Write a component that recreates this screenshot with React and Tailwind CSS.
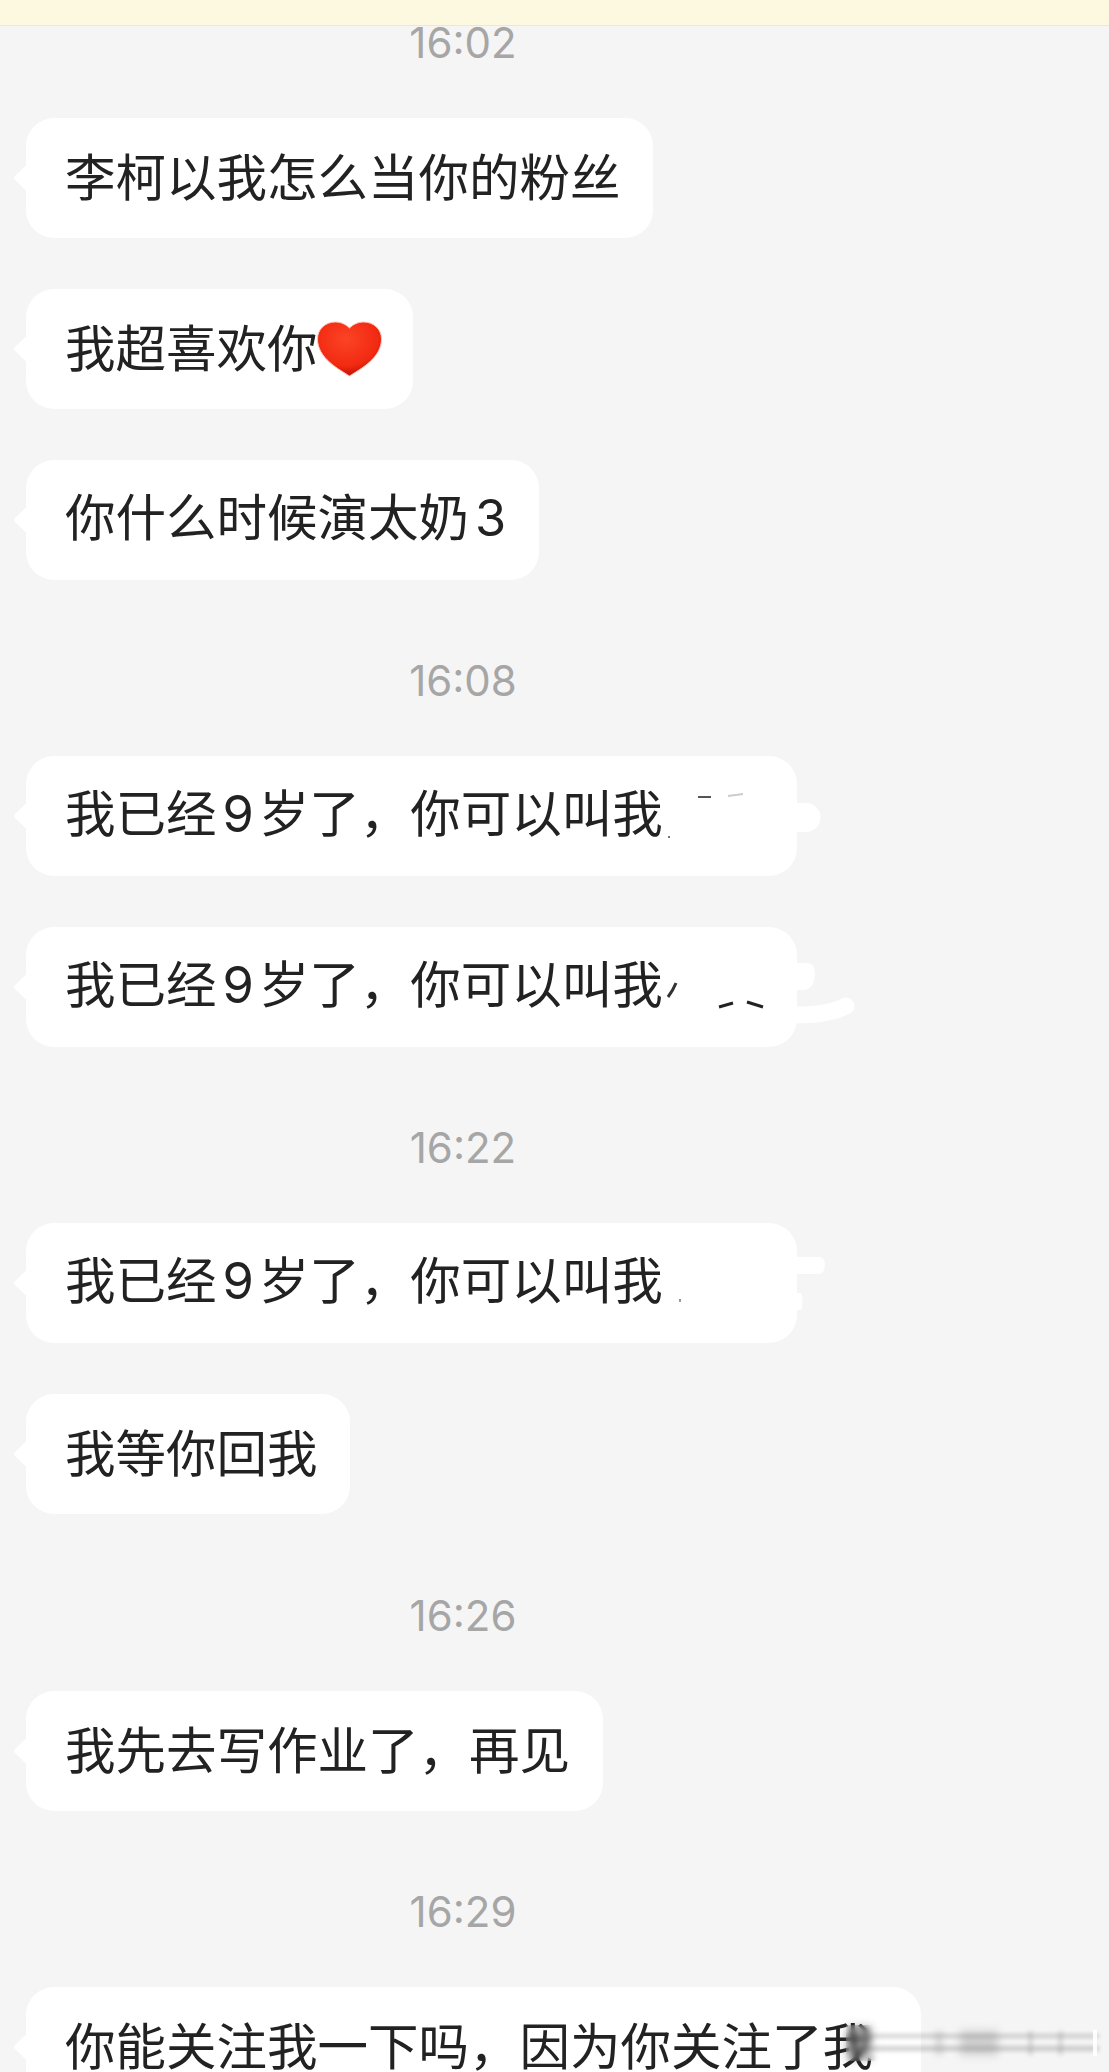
import React from 'react';

const font = { fontFamily: '"Noto Sans CJK SC", "Noto Sans", sans-serif' };
const latin = { fontFamily: 'Inter, sans-serif' };

function Time({ children, className = '' }) {
  return (
    <div className={`w-[926px] h-[49px] text-center text-[42px] leading-[50px] text-[#a6a6a6] ${className}`} style={latin}>
      {children}
    </div>
  );
}

function Bubble({ width, text, after, marks }) {
  return (
    <div className={`relative ml-[26px] h-[120px] shrink-0 ${width}`}>
      {/* tail */}
      <div className="absolute left-[-9px] top-[51px] h-[18px] w-[18px] rotate-45 rounded-[2px] bg-white" />
      <div className="relative flex h-full items-center rounded-[28px] bg-white pb-[7px] pl-[39px] text-[50.5px] text-[#222] whitespace-nowrap">
        <span>{text}</span>
        {after}
      </div>
      {marks}
    </div>
  );
}

function Digit({ children, className }) {
  return <span className={className} style={latin}>{children}</span>;
}

function Heart() {
  return (
    <svg width="67" height="56" viewBox="0 0 66 56" className="-ml-[2px] mt-[7px] shrink-0">
      <defs>
        <radialGradient id="heartFill" cx="45%" cy="32%" r="72%">
          <stop offset="0%" stopColor="#fb4426" />
          <stop offset="68%" stopColor="#f22a12" />
          <stop offset="100%" stopColor="#b80e02" />
        </radialGradient>
      </defs>
      <path
        d="M33 55C22 48 1 37 1 18C1 8 9 1 19 1C25 1 30 4 33 7C36 4 41 1 47 1C57 1 65 8 65 18C65 37 44 48 33 55Z"
        fill="url(#heartFill)"
        stroke="#ffc4b8"
        strokeWidth="1"
      />
    </svg>
  );
}

const nine = (
  <>
    我已经<Digit className="ml-[6px] mr-[5px]">9</Digit>岁了，你可以叫我
  </>
);

export default function App() {
  return (
    <div className="h-[2072px] w-[1109px] overflow-hidden bg-[#f5f5f5]" style={font}>
      <div className="relative z-10 h-[26px] border-b border-[#efe9c9] bg-[#fdf8e0]" />

      <div className="-mt-[8px] flex flex-col gap-[51px]">
        <Time>16:02</Time>
        <Bubble width="w-[627px]" text="李柯以我怎么当你的粉丝" />
        <Bubble width="w-[387px]" text="我超喜欢你" after={<Heart />} />
        <Bubble
          width="w-[513px]"
          text={
            <>
              你什么时候演太奶<Digit className="ml-[6px]">3</Digit>
            </>
          }
        />

        <Time className="mt-[25px]">16:08</Time>
        <Bubble
          width="w-[771px]"
          text={nine}
          marks={
            <svg width="200" height="120" viewBox="0 0 200 120" className="absolute left-[630px] top-0 overflow-visible">
              <path d="M141 47h9a14.5 14.5 0 0 1 0 29h-9z" fill="#fff" />
              <path d="M42 41h13" stroke="#555" strokeWidth="2" />
              <path d="M72 40l15-2" stroke="#ccc" strokeWidth="2" />
              <path d="M12 81h2" stroke="#777" strokeWidth="2" />
            </svg>
          }
        />
        <Bubble
          width="w-[771px]"
          text={nine}
          marks={
            <svg width="200" height="120" viewBox="0 0 200 120" className="absolute left-[630px] top-0 overflow-visible">
              <path d="M141 36h10q8 0 8 12q0 12-10 15h-8z" fill="#fff" />
              <path d="M141 88C160 88 178 85 190 79" fill="none" stroke="#fff" strokeWidth="17" strokeLinecap="round" />
              <path d="M20 56C18 61 15 66 12 70" fill="none" stroke="#333" strokeWidth="3" />
              <path d="M63 80L77 76M91 75L107 80" fill="none" stroke="#222" strokeWidth="3" />
            </svg>
          }
        />

        <Time className="mt-[25px]">16:22</Time>
        <Bubble
          width="w-[771px]"
          text={nine}
          marks={
            <svg width="200" height="120" viewBox="0 0 200 120" className="absolute left-[630px] top-0 overflow-visible">
              <path d="M141 34h22q6 0 6 8q0 8-6 9h-22z" fill="#fff" />
              <path d="M141 70h4q3 8 0 17h-4z" fill="#fff" />
              <path d="M24 76v3" stroke="#999" strokeWidth="2" />
            </svg>
          }
        />
        <Bubble width="w-[324px]" text="我等你回我" />

        <Time className="mt-[26px]">16:26</Time>
        <Bubble width="w-[577px]" text="我先去写作业了，再见" />

        <Time className="mt-[25px]">16:29</Time>
        <Bubble
          width="w-[895px]"
          text="你能关注我一下吗，因为你关注了我"
          marks={
            // smeared end of the last message
            <div className="absolute left-[820px] top-[38px] flex h-[36px] w-[253px] items-center">
              <div className="absolute inset-y-0 left-0 w-[34px] backdrop-blur-[3px]" />
              <div className="absolute inset-x-0 top-[9px] h-[4px] bg-[#666] opacity-30 blur-[2px]" />
              <div className="absolute inset-x-0 top-[21px] h-[5px] bg-[#666] opacity-30 blur-[2px]" />
              <div className="h-[34px] w-[26px] bg-[#333] opacity-35 blur-[4px]" />
              <div className="ml-[63px] h-[24px] w-[8px] bg-[#999] opacity-30 blur-[3px]" />
              <div className="ml-[17px] h-[24px] w-[38px] bg-[#888] opacity-35 blur-[4px]" />
              <div className="ml-[30px] h-[24px] w-[5px] bg-[#999] opacity-30 blur-[2px]" />
              <div className="ml-[25px] h-[24px] w-[5px] bg-[#999] opacity-30 blur-[2px]" />
              <div className="ml-[30px] h-[26px] w-[4px] bg-white opacity-90" />
            </div>
          }
        />
      </div>
    </div>
  );
}
